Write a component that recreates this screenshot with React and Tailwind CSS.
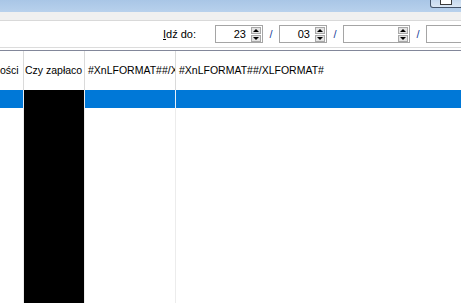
import React from "react";

function Spin() {
  return (
    <div className="flex flex-col w-[10px] h-[15px] mr-[1px] gap-[1px]">
      <div className="flex-1 bg-[#e3e3e3] border border-[#a8a8a8] flex items-center justify-center">
        <div className="w-0 h-0 border-l-[3px] border-r-[3px] border-b-[3px] border-l-transparent border-r-transparent border-b-black" />
      </div>
      <div className="flex-1 bg-[#e3e3e3] border border-[#a8a8a8] flex items-center justify-center">
        <div className="w-0 h-0 border-l-[3px] border-r-[3px] border-t-[3px] border-l-transparent border-r-transparent border-t-black" />
      </div>
    </div>
  );
}

function Box({ w, value, spin = true }) {
  return (
    <div
      className="h-[18px] border border-[#a5a5a5] bg-white flex items-center justify-end shrink-0"
      style={{ width: w }}
    >
      {value && <span className="mr-[5px] text-[11px] leading-none text-black">{value}</span>}
      {spin && <Spin />}
    </div>
  );
}

function Slash() {
  return (
    <div className="w-[16px] shrink-0 flex justify-center text-[11px] leading-none text-[#1b3f9a]">/</div>
  );
}

export default function App() {
  return (
    <div
      className="w-[461px] h-[303px] overflow-hidden bg-white flex flex-col"
      style={{ fontFamily: '"Liberation Sans", Arial, sans-serif' }}
    >
      {/* title bar */}
      <div className="h-[12px] shrink-0 bg-gradient-to-b from-[#a9c6e6] to-[#b8d1ec] flex justify-end items-start">
        <div className="w-[33px] h-[8px] mr-[-2px] border border-t-0 border-[#44546a] rounded-b-[3px] bg-gradient-to-b from-[#c4d8ee] to-[#dbe7f4] flex justify-start items-start">
          <div className="ml-[9px] w-[12px] h-[5px] bg-white border border-t-0 border-[#3a3a3a]" />
        </div>
      </div>
      {/* gray band */}
      <div className="h-[9px] shrink-0 bg-[#f0f0f0] border-b border-[#d9d9d9]" />
      {/* toolbar */}
      <div className="h-[27px] shrink-0 bg-white border-b border-[#dcdcdc] flex items-center pl-[163px]">
        <span className="w-[52px] shrink-0 text-[11px] leading-none text-black">
          <span className="underline">I</span>dź do:
        </span>
        <Box w={48} value="23" />
        <Slash />
        <Box w={48} value="03" />
        <Slash />
        <Box w={67} value="" />
        <Slash />
        <Box w={60} value="" spin={false} />
      </div>
      <div className="h-[2px] shrink-0 bg-white" />
      {/* grid */}
      <div className="flex-1 border-t border-[#82879a] flex text-[10.5px] text-black">
        {/* col1 */}
        <div className="w-[24px] shrink-0 flex flex-col">
          <div className="h-[39px] border-r border-[#dadada] flex items-center overflow-hidden">
            <span className="whitespace-nowrap">ości</span>
          </div>
          <div className="h-[18px] bg-[#0078d7] border-r border-[#e8f0f8]" />
          <div className="flex-1 border-r border-[#ececec]" />
        </div>
        {/* col2 */}
        <div className="w-[61px] shrink-0 flex flex-col">
          <div className="h-[39px] border-r border-[#dadada] flex items-center overflow-hidden pl-[1px]">
            <span className="whitespace-nowrap">Czy zapłaco</span>
          </div>
          <div className="flex-1 bg-black border-r border-[#ececec]" />
        </div>
        {/* col3 */}
        <div className="w-[91px] shrink-0 flex flex-col">
          <div className="h-[39px] border-r border-[#dadada] flex items-center overflow-hidden pl-[3px]">
            <span className="whitespace-nowrap">#XnLFORMAT##/XLFORMAT#</span>
          </div>
          <div className="h-[18px] bg-[#0078d7] border-r border-[#e8f0f8]" />
          <div className="flex-1 border-r border-[#ececec]" />
        </div>
        {/* col4 */}
        <div className="flex-1 flex flex-col">
          <div className="h-[39px] flex items-center overflow-hidden pl-[3px]">
            <span className="whitespace-nowrap">#XnLFORMAT##/XLFORMAT#</span>
          </div>
          <div className="h-[18px] bg-[#0078d7]" />
          <div className="flex-1" />
        </div>
      </div>
    </div>
  );
}
